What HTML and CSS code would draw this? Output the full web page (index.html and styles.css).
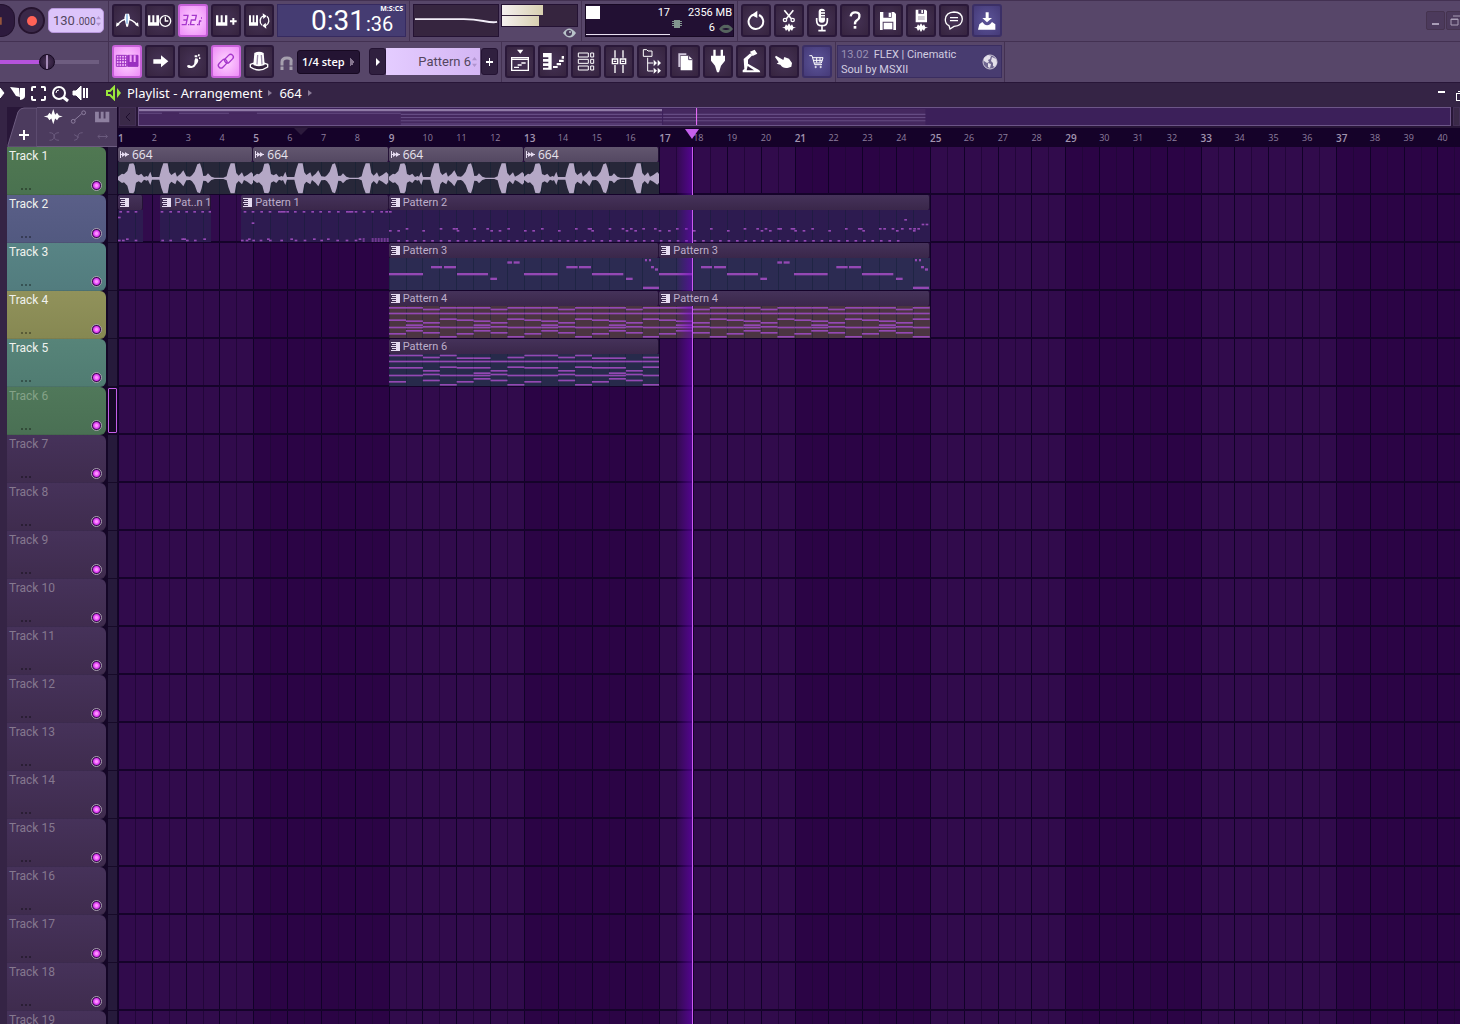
FILE: index.html
```html
<!DOCTYPE html>
<html lang="en">
<head>
<meta charset="utf-8">
<title>Playlist - Arrangement</title>
<link rel="stylesheet" href="styles.css">
</head>
<body>
<header class="toolbar">
  <div class="bar">
    <section class="group transport">
      <button class="play" aria-label="Pause"><svg viewBox="0 0 15 33"><path d="M0 13h1v8H0z" fill="#f0883c"/></svg></button>
      <button class="record" aria-label="Record"><span class="record-dot"></span></button>
      <label class="tempo"><input class="tempo-main" aria-label="Tempo" value="130"><span class="tempo-fine">.000</span><svg class="spin" viewBox="0 0 6 12"><path d="M0 4l3-4 3 4zM0 8l3 4 3-4z"/></svg></label>
    </section>
    <section class="group">
      <button class="tool" aria-label="Metronome"><svg viewBox="0 0 90 99"><path d="M15 64Q30 45 45 45T77 64" fill="none" stroke="#fff" stroke-width="4"/><path d="M12 68l2-13 9 7zM80 68l-2-13-9 7zM40 29h11l3 12-6 27h-5l-6-27z" fill="#fff"/><path d="M45 31v28" stroke="#6fa6dc" stroke-width="4"/></svg></button>
      <button class="tool" aria-label="Wait for input"><svg viewBox="0 0 90 99"><path d="M9 34h7v21h6V34h6v21h6V34h8v31H9z" fill="#fff"/><circle cx="61" cy="51" r="16" fill="#34233f" stroke="#fff" stroke-width="4"/><path d="M61 38v13h9" fill="none" stroke="#fff" stroke-width="4"/></svg></button>
      <button class="tool lit" aria-label="Countdown"><svg viewBox="0 0 90 99" fill="none" stroke="#a636cc" stroke-width="4"><path d="M16 34h14l-3 14H16h11l-3 14H11M41 34h14l-3 14H40l-3 14h13M30 62h3M57 62h3M72 42h-3M70 51h-5l-2 11h3"/></svg></button>
      <button class="tool" aria-label="Overdub"><svg viewBox="0 0 90 99" fill="#fff"><path d="M15 34h7v21h7V34h6v21h7V34h7v31H15z"/><path d="M64 42h6v7h7v6h-7v7h-6v-7h-7v-6h7z"/></svg></button>
      <button class="tool" aria-label="Loop record"><svg viewBox="0 0 90 99"><path d="M15 34h6v21h5V34h5v21h5V34h6v31H15z" fill="#fff"/><path d="M54 64a14 16 0 0 1 4-28M69 37a14 16 0 0 1-4 28" fill="none" stroke="#fff" stroke-width="4"/><path d="M56 28l12 8-10 9zM67 74l-12-9 10-9z" fill="#fff"/></svg></button>
      <output class="clock"><span class="clock-main">0:31</span><span class="clock-side"><small>M:S:CS</small><span>:36</span></span></output>
    </section>
    <section class="group meters">
      <svg class="scope" viewBox="0 0 86 33" preserveAspectRatio="none"><path d="M1 15h50q10 0 20 2t14 1" fill="none" stroke="#f2edf8" stroke-width="2"/></svg>
      <div class="levels"><div class="level-box"><i class="level"></i><i class="level low"></i></div>
      <svg class="eye" viewBox="0 0 13 10"><path d="M0 5q6-9 13 0q-6 9-13 0" fill="#b9c4ca"/><circle cx="6" cy="5" r="3" fill="#4a3b5c"/><circle cx="7" cy="4" r="1" fill="#b9c4ca"/></svg></div>
    </section>
    <section class="group">
      <div class="system">
        <div class="cpu"><i class="cpu-box"></i><span>17</span></div>
        <div class="mem"><span>2356 MB</span></div>
        <svg class="cpu-line" viewBox="0 0 84 16" preserveAspectRatio="none"><path d="M0 14.500h84" fill="none" stroke="#e8e0f0"/></svg>
        <div class="poly"><svg class="chip" viewBox="0 0 10 8"><path d="M2 0h6v8H2zM0 1h10v1H0zM0 3h10v1H0zM0 5h10v1H0z" fill="#82968f"/></svg><span>6</span><svg class="lips" viewBox="0 0 14 9"><path d="M0 5Q4 0 7 1q3-1 7 4-3 4-7 4T0 5z" fill="#56645f"/><path d="M3 5q4-2 8 0-4 2-8 0" fill="#221033"/></svg></div>
      </div>
    </section>
    <section class="group last">
      <button class="tool" aria-label="Undo"><svg viewBox="0 0 90 99"><path d="M38 32a22 22 0 1 0 16 1" fill="none" stroke="#fff" stroke-width="6"/><path d="M31 33l18-13v22z" fill="#fff"/></svg></button>
      <button class="tool" aria-label="Cut"><svg viewBox="0 0 90 99"><path d="M31 19l21 25M58 19L37 44" stroke="#fff" stroke-width="5"/><circle cx="33" cy="48" r="5" fill="none" stroke="#fff" stroke-width="4"/><circle cx="56" cy="48" r="5" fill="none" stroke="#fff" stroke-width="4"/><path d="M24 71l8-2 4-8 4 5 5-8 5 8 4-5 4 8 8 2-8 2-4 8-4-5-5 8-5-8-4 5-4-8z" fill="#fff"/></svg></button>
      <button class="tool" aria-label="Microphone"><svg viewBox="0 0 90 99"><rect x="35" y="14" width="19" height="42" rx="9" fill="#fff"/><path d="M42 23h12M42 31h12M42 39h12" stroke="#34233f" stroke-width="3"/><path d="M29 42v8q0 15 16 15t16-15v-8M45 65v14M34 80h22" fill="none" stroke="#fff" stroke-width="5"/></svg></button>
      <button class="tool" aria-label="Help"><svg viewBox="0 0 90 99"><path d="M32 37q2-13 15-12t11 13q0 7-7 11t-6 12" fill="none" stroke="#fff" stroke-width="7"/><path d="M41 66h8v8h-8z" fill="#fff"/></svg></button>
      <button class="tool" aria-label="Save"><svg viewBox="0 0 90 99"><path d="M21 24h42l6 6v48H21z" fill="#fff"/><path d="M31 24h25v17H31zM29 53h32v25H29z" fill="#4c3a5e"/><path d="M47 26h7v13h-7zM32 56h26v20H32z" fill="#fff"/></svg></button>
      <button class="tool" aria-label="Save new version"><svg viewBox="0 0 90 99"><path d="M29 17h30l4 4v34H29z" fill="#fff"/><path d="M37 17h17v12H37zM36 38h20v2H36zM36 44h20v2H36z" fill="#4c3a5e"/><path d="M46 18h5v9h-5zM24 71l8-2 4-8 4 5 5-8 5 8 4-5 4 8 8 2-8 2-4 8-4-5-5 8-5-8-4 5-4-8z" fill="#fff"/></svg></button>
      <button class="tool" aria-label="Comments"><svg viewBox="0 0 90 99" fill="none" stroke="#fff" stroke-width="4"><path d="M30 65q-12-6-11-19 2-21 26-22 24 1 25 21-1 21-25 22l-12 8z"/><path d="M33 41h24M33 50h24"/></svg></button>
      <button class="tool blue" aria-label="Download"><svg viewBox="0 0 90 99" fill="#fff"><path d="M41 25h9v17h10L45 55 31 42h10zM22 61l9-7 6 7q8 6 17 0l6-7 10 7v16H18z"/></svg></button>
    </section>
    <div class="window-keys">
      <button class="window-key" aria-label="Minimize"><svg viewBox="0 0 19 19"><path d="M6 12h7v2H6z" fill="#a99db6"/></svg></button>
      <button class="window-key" aria-label="Restore"><svg viewBox="0 0 19 19" fill="none" stroke="#a99db6"><path d="M5 8h7v6H5zM5 8.500h7M7 5h8v7"/></svg></button>
    </div>
  </div>
  <div class="bar">
    <section class="group transport"><input class="pitch" type="range" min="0" max="100" value="47" aria-label="Main volume"></section>
    <section class="group">
      <button class="tool lit" aria-label="Typing keyboard"><svg viewBox="0 0 90 99" fill="none" stroke="#9a2fc0" stroke-width="3"><path d="M13 31h31v33H13zM13 39h31M13 47h31M13 56h31M21 31v33M29 31v33M37 31v33"/><path d="M47 31h31v33H47z" fill="#9a2fc0"/><path d="M56 31v20M68 31v20" stroke="#f4a4fa" stroke-width="6"/></svg></button>
      <button class="tool" aria-label="Step"><svg viewBox="0 0 90 99"><path d="M25 43h23V31l22 18-22 18V56H25z" fill="#fff"/></svg></button>
      <button class="tool" aria-label="Slide"><svg viewBox="0 0 90 99" fill="#fff"><path d="M27 62q6-4 12 1 9-1 10-9 0-10 3-14 9-1 9 7-2 8-7 12-4 9-13 10-13 2-14-7z"/><path d="M50 31h8v6h-8zM60 28h5v6h-5zM63 37h4v5h-4z"/></svg></button>
      <button class="tool lit" aria-label="Link"><svg viewBox="0 0 90 99" fill="none" stroke="#a636cc" stroke-width="4"><rect x="20" y="48" width="30" height="16" rx="8" transform="rotate(-45 35 56)"/><rect x="39" y="33" width="30" height="16" rx="8" transform="rotate(-45 54 41)"/></svg></button>
      <button class="tool" aria-label="Stamp"><svg viewBox="0 0 90 99"><path d="M19 58q26-12 52 0v8q-26 18-52 0z" fill="#34233f" stroke="#fff" stroke-width="4"/><path d="M31 24q14-8 28 0l3 36q-17 7-34 0z" fill="#fff"/><path d="M41 30l-2 28M52 30l2 28" stroke="#9c8cab" stroke-width="4"/></svg></button>
      <svg class="magnet" viewBox="0 0 13 14"><path d="M2 14V6q0-4 5-4t4 4v8" fill="none" stroke="#a6a0ae" stroke-width="3"/><path d="M0 10h4M9 10h4" stroke="#574669"/></svg>
      <select class="snap" aria-label="Snap"><option>1/4 step</option></select>
      <button class="mini-key" aria-label="Pattern menu"><svg viewBox="0 0 17 27"><path d="M7 10l4 4-4 4z" fill="#fff"/></svg></button><span class="pattern-box"><select class="pattern" aria-label="Pattern"><option>Pattern 6</option></select><svg class="spin" viewBox="0 0 6 12"><path d="M0 4l3-4 3 4zM0 8l3 4 3-4z"/></svg></span><button class="mini-key add" aria-label="Add pattern"><svg viewBox="0 0 17 27"><path d="M8 10h1v3h3v2H9v3H8v-3H5v-2h3z" fill="#fff"/></svg></button>
    </section>
    <section class="group">
      <button class="tool" aria-label="Playlist"><svg viewBox="0 0 90 99"><path d="M36 14h19l-9 12z" fill="#fff"/><path d="M20 38h50v38H20zM20 43h50" fill="none" stroke="#fff" stroke-width="4"/><path d="M27 67h15M38 60h12M49 54h13" stroke="#fff" stroke-width="4"/></svg></button>
      <button class="tool" aria-label="Piano roll"><svg viewBox="0 0 90 99" fill="#fff"><path d="M15 24h26v50H15v-6h16v-5H15v-8h16v-5H15v-8h16v-5H15z"/><path d="M45 63h14v6H45zM56 54h13v7H56zM63 44h14v7H63zM71 33h7v8h-7z"/></svg></button>
      <button class="tool" aria-label="Channel rack"><svg viewBox="0 0 90 99" fill="none" stroke="#fff" stroke-width="3"><path d="M22 24h30v12H22zM59 24h9v12h-9zM22 43h30v12H22zM59 43h9v12h-9zM22 63h30v12H22zM59 63h9v12h-9z"/></svg></button>
      <button class="tool" aria-label="Mixer"><svg viewBox="0 0 90 99" fill="none" stroke="#fff" stroke-width="4"><path d="M25 42h16v14H25zM49 42h16v14H49zM33 16v22M57 16v22M33 60v24M57 60v24M29 49h8M53 49h8"/></svg></button>
      <button class="tool" aria-label="Browser"><svg viewBox="0 0 90 99"><path d="M19 14h10l4 4h12v16H19zM32 38v40h16M32 54h16" fill="none" stroke="#fff" stroke-width="3"/><path d="M50 44l10 10-10 10zM62 44l10 10-10 10zM50 68l10 9-10 9zM62 68l10 9-10 9z" fill="#fff"/></svg></button>
      <button class="tool" aria-label="Project"><svg viewBox="0 0 90 99"><path d="M25 25h24v5H31v36h-6z" fill="#cfc5da"/><path d="M32 32h24l11 11v33H32z" fill="#fff"/><path d="M56 32v12h11" fill="none" stroke="#4c3a5e" stroke-width="3"/></svg></button>
      <button class="tool" aria-label="Plugins"><svg viewBox="0 0 90 99" fill="#fff"><path d="M31 14h7v18h15V14h7v18h6v15L54 62l-6 20h-6l-6-20-12-15V32h7z"/></svg></button>
      <button class="tool" aria-label="Tempo tapper"><svg viewBox="0 0 90 99"><path d="M42 20l14-6 8 12-14 7zM23 42l20-17 6 6-13 13v12l34 20 3 6H20v-6l5-4z" fill="#fff"/><path d="M35 63l-3 13h22z" fill="#34233f"/></svg></button>
      <button class="tool" aria-label="Touch"><svg viewBox="0 0 90 99"><path d="M21 32l22 13 3-9 14 5 9 13-2 11-9 3q-15 4-24-9l-11-3 6-4-11-16z" fill="#fff"/></svg></button>
      <button class="tool blue" aria-label="Shop"><svg viewBox="0 0 90 99" fill="none" stroke="#fff" stroke-width="3"><path d="M22 32h8l8 27h22M32 38h31l-5 16H37M33 46h28M44 38v15M54 38v15"/><circle cx="41" cy="66" r="2"/><circle cx="56" cy="66" r="2"/></svg></button>
    </section>
    <section class="group news-group">
      <a class="news" href="#news"><span><time>13.02</time>FLEX | Cinematic<br>Soul by MSXII</span><svg class="globe" viewBox="0 0 16 16"><circle cx="8" cy="8" r="7" fill="#6f6690" stroke="#c9c4d4"/><path d="M2 4l4-3 3 1-1 3-2 1 1 2-2 1-3-2zM6 9l3 1-1 4-2-1zM10 3l4 2 1 4-2 4-2-1v-3l-2-2z" fill="#e4e0ea"/></svg></a>
    </section>
  </div>
</header>

<main class="playlist">
  <div class="titlebar">
    <svg class="title-icons" viewBox="0 0 90 20" fill="none" stroke="#fff"><path d="M0 5l4 5-4 5z" fill="#fff"/><path d="M10 4l9 1 1 9-4-1z" fill="#fff" stroke="none"/><path d="M20 5h5v8q0 3-5 4z" fill="#fff" stroke="none"/><path d="M32 8V5q0-1 1-1h3M41 4h3q1 0 1 1v3M45 13v3q0 1-1 1h-3M36 17h-3q-1 0-1-1v-3" stroke-width="2"/><circle cx="59" cy="10" r="6" stroke-width="2"/><path d="M63 14l5 4" stroke-width="3"/><path d="M56 10q0-3 3-3"/><path d="M73 8h3l5-5v14l-5-5h-3z" fill="#fff"/><path d="M84 5v10M87 5v10" stroke-width="2"/></svg>
    <svg class="speaker" viewBox="0 0 15 16"><path d="M1 6h3l4-4v12l-4-4H1z" fill="none" stroke="#9ae63c" stroke-width="2"/><path d="M11 3l4 5-4 5z" fill="#9ae63c"/></svg>
    <h1 class="title">Playlist - Arrangement<i class="caret"></i>664<i class="caret"></i></h1>
    <svg class="title-keys" viewBox="0 0 24 20" fill="#fff"><path d="M2 8h7v2H2z"/><path d="M20 10h4v1h-3v6h3v1h-4zM22 8h2v1h-2z"/></svg>
  </div>
  <div class="arrangement">
    <div class="corner">
      <button class="tab" aria-label="Add track"><svg viewBox="0 0 30 40"><path d="M1 40V38L11 5Q13 1 17 1H30V40z" fill="#4c3b5e" stroke="#6d5c80"/><path d="M12 27h4v-4h2v4h4v2h-4v4h-2v-4h-4z" fill="#fff"/></svg></button>
      <svg class="modes" viewBox="0 0 80 40"><path d="M5 9l4-1 2-3 2 2 2-6 2 6 2-2 2 3 4 1-4 1-2 3-2-2-2 6-2-6-2 2-2-3z" fill="#fff"/><path d="M37 13l8-7" stroke="#8e80a0"/><circle cx="36" cy="14" r="2" fill="none" stroke="#8e80a0"/><circle cx="47" cy="5" r="2" fill="none" stroke="#8e80a0"/><path d="M59 4h4v7h2V4h3v7h2V4h4v11H59z" fill="#8e80a0"/><g fill="none" stroke="#6c5c7e"><path d="M11 26q5 0 5 4t5 4M11 34q5 0 5-4t5-4M37 34q4 0 4-4t5-4M37 28l5 3M62 30h10M64 28l-2 2 2 2M70 28l2 2-2 2"/></g></svg>
    </div>
    <div class="topline">
      <div class="overview-row">
        <button class="scroll" aria-label="Scroll left"><svg viewBox="0 0 17 18"><path d="M11 5L7 9l4 4" fill="none" stroke="#1d0d2c"/></svg></button>
        <svg class="overview" viewBox="0 0 1312 16" preserveAspectRatio="none"><path d="M0 1h787v15H0z" fill="#45285f"/><path d="M0 2h524" stroke="#8f7aa6" stroke-width="2"/><path d="M0 5h23M40 5h50M118 5h144M262 6h525M262 9h525M262 12h525M262 15h262" stroke="#654b83" /><path d="M524 0v16" stroke="#3c205a"/><path d="M558 0v16" stroke="#f070ff"/></svg>
        <button class="scroll end" aria-label="Scroll right"></button>
      </div>
      <div class="ruler" id="ruler"></div>
    </div>
    <div class="heads" id="heads"></div>
    <div class="lanes" id="lanes">
      <div class="grid" id="grid"></div>
    </div>
  </div>
</main>
<script src="playlist.js"></script>
</body>
</html>
```
FILE: playlist.js
```js
const VISIBLE_BARS = 119 / 3;
const pct = bars => (bars / VISIBLE_BARS * 100) + '%';
const el = (tag, cls, html) => {
  const node = document.createElement(tag);
  if (cls) node.className = cls;
  if (html) node.innerHTML = html;
  return node;
};

// Ruler and grid
const ruler = document.getElementById('ruler');
for (let b = 1; b <= 40; b++) ruler.append(el('span', b % 4 === 1 ? 'bar-no major' : 'bar-no', String(b)));
const grid = document.getElementById('grid');
for (let h = 0; h < 80; h++) grid.append(el('i', (h % 2 ? 'half' : 'whole') + (Math.floor(h / 8) % 2 ? ' dark' : '')));

// Track heads and lanes
const tones = ['green', 'blue', 'teal', 'olive', 'sea', 'moss'];
const heads = document.getElementById('heads');
const lanes = document.getElementById('lanes');
const rows = [];
for (let t = 1; t <= 19; t++) {
  const head = el('div', 'head ' + (tones[t - 1] || 'empty'));
  head.innerHTML = `<label class="name" for="mute${t}">Track ${t}</label><span class="dots"><i></i><i></i><i></i></span><input class="led" type="checkbox" id="mute${t}" checked>`;
  const wrap = el('div', 'head-row');
  wrap.append(head, el('i', t === 6 ? 'focus on' : 'focus'));
  heads.append(wrap);
  const lane = el('div', 'lane');
  lanes.append(lane);
  rows.push(lane);
}

// Note pictures: three units to a pixel, one bar is 101.5 units
const note = (x, y, w, h) => `<rect x="${x}" y="${y}" width="${w}" height="${h}"/>`;
const picture = (bars, body) => `<svg class="notes" viewBox="0 0 ${bars * 101.5} 96" preserveAspectRatio="none">${body}</svg>`;
const dots = list => list.map(([x, y]) => note(x - 4, y - 3, 8, 5)).join('');

// Waveform outline as pairs: position, half height
const outline = [0,5, 12,14, 18,12, 28,22, 34,44, 46,45, 50,38, 54,13, 62,9, 70,14, 78,4, 86,7, 90,5, 97,20, 102,4, 124,4, 130,28, 136,45, 149,45, 154,18, 160,10, 172,18, 177,5, 188,14, 196,24, 205,6, 216,5, 222,9, 230,20, 238,42, 246,45, 251,30, 256,7, 264,8, 270,15, 280,5, 290,2, 316,2, 326,6, 331,26, 338,45, 350,45, 355,16, 362,8, 372,18, 378,5, 388,10, 400,19, 406,12];
let up = '', down = '';
for (let i = 0; i < outline.length; i += 2) {
  up += `${outline[i]},${49 - outline[i + 1]} `;
  down = `${outline[i]},${49 + outline[i + 1]} ` + down;
}
const wave = () => picture(4, `<polygon class="wave" points="${up}${down}"/>`);

const row = (xs, y) => xs.map(x => [x, y]);
const p1short = dots([...row([8, 30, 54], 6), [4, 23], ...row([4, 16, 54], 92), [28, 88]]);
const p1mid = dots([...row([6, 32, 56, 80, 104, 128, 150], 6), ...row([8, 32, 82, 106], 92), ...row([68, 74, 134], 88)]);
const p1long = dots([...row([12, 36, 62, 87, 115, 122, 130, 140, 163, 189, 215, 239, 265, 292, 319, 326, 333, 345, 369, 395, 422, 437], 6),
  [36, 40], ...row([4, 18, 38, 60, 88, 122, 165, 192, 242, 290, 318, 345], 92), ...row([25, 82, 152, 220, 262, 357], 88)])
  + [368, 395, 404, 413, 422, 431, 440].map(x => note(x - 3, 85, 6, 4) + note(x - 3, 91, 6, 4)).join('');
const low = [];
for (let x = 29; x < 1540; x += 25.4) low.push([x, 93]);
const upper = [54, 156, 195, 203, 257, 296, 359, 460, 562, 600, 605, 663, 702, 727, 764, 799, 865, 892, 967, 1068, 1106, 1131, 1169, 1175, 1209, 1215, 1271, 1372, 1411, 1417, 1474, 1487, 1512, 1540, 1564, 1577, 1589];
const under = [4, 29, 104, 207, 308, 333, 409, 434, 511, 611, 714, 740, 813, 841, 916, 1018, 1119, 1144, 1220, 1245, 1322, 1424, 1525, 1576];
const p2 = dots([[4, 6], ...row(upper, 57), ...row(under, 63), ...low, [1550, 30], [1602, 44], [1614, 44]]);
const p3 = [[0,49,102],[126,28,33],[165,28,36],[204,49,93],[304,63,20],[355,14,14],[374,14,18],[405,49,101],[532,28,34],[570,28,36],[609,49,94],[711,63,20],[768,7,6],[780,7,6],[786,28,9],[798,35,9],[762,90,48]]
  .map(([x, y, w]) => note(x, y - 4, w, 7)).join('');
const chords = cols => cols.map((ys, i) => ys.map(y => note(i * 50.75, y - 3, 51, 5)).join('')).join('');
const four = [[6,23,43,65,84],[6,23,46,58,65,75],[11,23,51,63,81],[6,23,40,65,93]];
const p4 = chords(Array.from({length: 16}, (_, i) => four[i % 4]));
const eight = [[5,23,42,65,84],[5,23,42,65],[11,23,51,62,80],[5,23,40,65,93],[13,23,42,65,84],[13,23,42,58,65,75],[23,51,62,80],[11,23,40,65,93]];
const p6 = chords(Array.from({length: 16}, (_, i) => eight[i % 8]));

const clips = [
  [0, 0, 4, '664', 'audio', wave()], [0, 4, 4, '664', 'audio', wave()], [0, 8, 4, '664', 'audio', wave()], [0, 12, 4, '664', 'audio', wave()],
  [1, 0, 0.75, '', 'violet', picture(0.75, p1short)],
  [1, 1.25, 1.5, 'Pat..n 1', 'violet', picture(1.5, p1mid)],
  [1, 3.64, 4.36, 'Pattern 1', 'violet', picture(4.36, p1long)],
  [1, 8, 16, 'Pattern 2', 'violet', picture(16, p2)],
  [2, 8, 8, 'Pattern 3', 'navy', picture(8, p3)], [2, 16, 8, 'Pattern 3', 'navy', picture(8, p3)],
  [3, 8, 8, 'Pattern 4', 'brown', picture(8, p4)], [3, 16, 8, 'Pattern 4', 'brown', picture(8, p4)],
  [4, 8, 8, 'Pattern 6', 'slate', picture(8, p6)],
];
const patternIcon = '<svg class="clip-icon" viewBox="0 0 9 9"><path d="M0 0h9v9H0V8h5V7H1V6h4V5H0V4h5V3H1V2h4V1H0z"/></svg>';
const audioIcon = '<svg class="clip-icon" viewBox="0 0 9 9"><path d="M0 1h1v7H0zM1 4h1V2l3 2V2l3 2h1v1H8L5 7V5L2 7V5H1z"/></svg>';
for (const [track, start, length, name, kind, body] of clips) {
  const clip = el('div', 'clip ' + kind);
  clip.style.left = pct(start);
  clip.style.width = pct(length);
  const icon = kind === 'audio' ? audioIcon : patternIcon;
  let lines = '';
  const first = Math.ceil(start * 2) / 2;
  for (let b = first; b < start + length; b += 0.5) lines += `<i class="tick" style="left:${(b - start) / length * 100}%"></i>`;
  clip.innerHTML = `<div class="clip-head">${icon}<span>${name}</span></div><div class="clip-body">${lines}${body}</div>`;
  rows[track].append(clip);
}

// Play position
const playhead = el('div', 'playhead');
playhead.style.left = pct(16.97);
lanes.append(playhead);
for (const [cls, at] of [['marker ghost', 5.4], ['marker', 16.97]]) {
  const marker = el('i', cls);
  marker.style.left = pct(at);
  ruler.append(marker);
}
```
FILE: styles.css
```css
* { box-sizing: border-box; }
body {
  margin: 0;
  height: 100vh;
  overflow: hidden;
  display: flex;
  flex-direction: column;
  background: #160527;
  color: #fff;
  font-family: "Open Sans", "Noto Sans", sans-serif;
  font-size: 11px;
}
button, input, select { font: inherit; color: inherit; margin: 0; padding: 0; border: 0; }
svg { display: block; }

/* Toolbar */
.toolbar { background: #574669; border-bottom: 1px solid #281638; flex: none; }
.bar { display: flex; height: 41px; border-top: 1px solid #433152; overflow: hidden; }
.group { display: flex; align-items: center; gap: 3px; padding: 0 3px 1px; border-right: 1px solid #433152; flex: none; }
.transport { width: 109px; padding: 0 4px 1px 0; }
.play { width: 15px; height: 33px; border-radius: 0 14px 14px 0; background: #2d1a3d; border: 1px solid #23122f; border-left: 0; }
.play svg { width: 15px; height: 31px; }
.record { width: 27px; height: 27px; border-radius: 50%; background: #3a2848; border: 2px solid #26142f; display: grid; place-items: center; }
.record-dot { width: 10px; height: 10px; border-radius: 50%; background: #ff6257; }
.tempo { display: flex; align-items: baseline; width: 56px; height: 25px; padding: 0 2px 0 4px; border-radius: 5px; background: #dcc4fa; border: 1px solid #b796dc; color: #54465f; font-family: Roboto, sans-serif; }
.tempo-main { width: 23px; height: 23px; background: none; font-size: 13px; }
.tempo-fine { font-size: 10px; flex: 1; }
.spin { width: 5px; height: 12px; align-self: center; fill: #b094cf; }
.tool { width: 30px; height: 33px; border-radius: 3px; background: radial-gradient(#463356, #36243f); border: 2px solid #2a1839; }
.tool svg { width: 30px; height: 33px; margin: -2px; }
.lit { background: radial-gradient(#ffd6ff, #ee8cf8); border-color: #c660d8; }
.blue { background: radial-gradient(#5d5599, #453a78); border-color: #3b2f66; }
.clock { display: flex; justify-content: flex-end; width: 129px; height: 33px; padding: 0 2px 0 0; background: #453c72; border: 1px solid #362a60; font-family: Roboto, sans-serif; }
.clock-main { font-size: 28px; line-height: 32px; }
.clock-side { display: flex; flex-direction: column; width: 38px; padding-left: 1px; font-size: 20px; line-height: 22px; }
.clock-side small { font: bold 7px/8px "Open Sans", sans-serif; text-align: right; }
.meters { gap: 2px; align-items: flex-start; padding: 3px 3px 0; }
.scope { width: 86px; height: 33px; background: #36253f; border: 1px solid #241233; }
.levels { width: 77px; display: flex; flex-direction: column; align-items: flex-end; gap: 1px; }
.level-box { width: 77px; height: 23px; background: #36253f; border: 1px solid #241233; display: flex; flex-direction: column; gap: 1px; }
.level { width: 41px; height: 10px; background: linear-gradient(90deg, #f5f0f0, #d8d0b0); }
.low { width: 37px; }
.eye { width: 13px; height: 10px; margin-right: 2px; }
.system { display: grid; grid-template-columns: 84px 63px; grid-template-rows: 15px 16px; width: 149px; height: 33px; background: #221033; border: 1px solid #170824; font: 11px/16px Roboto, sans-serif; }
.cpu, .mem, .poly { display: flex; align-items: center; justify-content: space-between; }
.mem { justify-content: flex-end; padding-right: 1px; }
.cpu-box { width: 14px; height: 13px; background: #fff; }
.cpu-line { width: 84px; height: 16px; }
.poly { gap: 4px; padding-left: 2px; }
.poly span { margin-left: auto; }
.chip { width: 10px; height: 8px; align-self: flex-start; }
.lips { width: 14px; height: 9px; }
.last { border-right: 0; }
.news-group { padding: 0 2px 1px 1px; }
.window-keys { display: flex; gap: 1px; margin: 10px -5px 0 auto; }
.window-key { width: 19px; height: 19px; flex: none; background: #4c3a5c; border: 1px solid #45334f; border-radius: 2px; }
.window-key svg { width: 19px; height: 19px; margin: -1px; }
.pitch { appearance: none; width: 99px; height: 20px; background: linear-gradient(90deg, #b553dc 47%, #6e5d80 47%) center / 100% 4px no-repeat; }
.pitch::-webkit-slider-thumb { appearance: none; width: 16px; height: 16px; border-radius: 50%; border: 1px solid #170a22; background: linear-gradient(90deg, transparent 6px, #a68cb8 6px, #a68cb8 8px, transparent 8px), radial-gradient(#4b3658, #241332); }
.magnet { width: 13px; height: 14px; margin: 2px 1px 0 3px; }
.snap { appearance: none; width: 63px; height: 24px; padding: 0 4px; border-radius: 3px; border: 1px solid #170922; background: #241433 conic-gradient(from 225deg at 5px 4px, #85758f 90deg, transparent 0) 52px 50% / 5px 8px no-repeat; font-weight: 600; }
.mini-key { width: 17px; height: 27px; background: #30203f; border: 1px solid #241333; border-radius: 3px; margin: 0 -3px 0 6px; }
.mini-key svg { width: 17px; height: 27px; margin: -1px; }
.add { margin: 0 0 0 -2px; }
.pattern-box { display: flex; align-items: center; width: 94px; height: 27px; padding-right: 3px; background: linear-gradient(90deg, #e4ccff, #d4b6f4); }
.pattern { appearance: none; flex: 1; height: 27px; padding-right: 1px; text-align-last: right; background: none; color: #54465f; font: 13px Roboto, sans-serif; }
.news { display: flex; align-items: center; justify-content: space-between; width: 165px; height: 33px; padding: 0 3px; background: #483c70; border: 1px solid #3a2d60; color: #d2cde0; text-decoration: none; font: 11px/15px Roboto, sans-serif; }
.news time { color: #9a92b4; margin-right: 5px; }
.globe { width: 16px; height: 16px; }

/* Playlist window */
.playlist { flex: 1; min-height: 0; display: flex; flex-direction: column; }
.titlebar { display: flex; align-items: center; height: 24px; padding-bottom: 4px; background: #352445; flex: none; }
.title-icons { width: 90px; height: 20px; }
.speaker { width: 15px; height: 16px; margin: 0 6px 0 16px; }
.title { margin: 0; font: 400 13px/20px "Noto Sans", sans-serif; display: flex; align-items: center; }
.caret { border: 3px solid transparent; border-left: 4px solid #8a7c98; border-right: 0; margin: 0 7px 0 6px; }
.title-keys { width: 24px; height: 20px; margin-left: auto; }
.arrangement { display: grid; grid-template-columns: 111px minmax(0, 1fr); grid-template-rows: 40px 1fr; flex: 1; min-height: 0; border-left: 7px solid #352445; overflow: hidden; background: #160527; }
.corner { display: flex; width: 110px; height: 40px; background: #281638; }
.tab { width: 30px; height: 40px; background: none; }
.tab svg { width: 30px; height: 40px; }
.modes { width: 80px; height: 40px; background: #4c3b5e; border: 1px solid #6d5c80; border-width: 1px 0; }
.topline { display: flex; flex-direction: column; min-width: 0; background: #281638; }
.overview-row { display: flex; height: 21px; padding: 0 0 2px 1px; gap: 2px; }
.scroll { width: 17px; height: 19px; background: #3a2948; border: 1px solid #432f55; flex: none; }
.scroll svg { width: 17px; height: 18px; margin: -1px; }
.end { width: 7px; }
.overview { flex: 1; min-width: 0; height: 19px; background: #3c205a; border: 1px solid #6d5588; }
.ruler { position: relative; flex: 1; display: grid; grid-template-columns: repeat(39, minmax(0, 3fr)) minmax(0, 2fr); background: #150229; border-bottom: 1px solid #2b1440; }
.bar-no { font: 9px/20px "Open Sans", sans-serif; color: #8d7f9d; }
.major { font-size: 10px; font-weight: 600; color: #a295b0; }
.marker { position: absolute; top: 1px; margin-left: -7px; border: 7px solid transparent; border-top: 10px solid #c560ec; border-bottom: 0; }
.ghost { top: 0; border-top: 7px solid #2c1a3c; }
.heads { display: flex; flex-direction: column; }
.head-row { display: flex; gap: 2px; height: 48px; flex: none; background: #140626; }
.head { position: relative; width: 99px; height: 48px; border-radius: 0 6px 6px 0; border-bottom: 1px solid #00000022; }
.name { display: block; padding: 0 2px; font: 12px/18px Roboto, sans-serif; color: #f0f2ee; }
.dots { position: absolute; left: 14px; bottom: 4px; display: flex; gap: 2px; }
.dots i { width: 2px; height: 2px; background: #00000055; }
.led { appearance: none; position: absolute; right: 4px; bottom: 3px; width: 11px; height: 11px; border-radius: 50%; border: 1px solid #a79fae; background: radial-gradient(#ff90ff 1px, #d838f0 3px, #3a0850 4px); }
.green { background: linear-gradient(#507852, #4a7250); }
.blue.head { background: linear-gradient(#5a5f88, #525980); }
.teal { background: linear-gradient(#588485, #527c7e); }
.olive { background: linear-gradient(#91925b, #868852); }
.sea { background: linear-gradient(#578479, #507c72); }
.moss { background: linear-gradient(#50785a, #4a7054); }
.moss .name { color: #85a288; }
.empty { background: linear-gradient(#46325a, #3f2c4e); }
.empty .name { color: #85788f; }
.focus { width: 9px; background: #261a3b; border-bottom: 1px solid #160a28; }
.on { border: 1px solid #c45ee8; margin: 1px 0 2px; border-radius: 1px; background: #170a26; }
.lanes { position: relative; overflow: hidden; background: #310b4c; }
.grid { position: absolute; inset: 0; display: grid; grid-template-columns: repeat(79, minmax(0, 3fr)) minmax(0, 1fr); overflow: hidden; grid-auto-rows: 100%; }
.whole { border-left: 1px solid #110228; }
.half { border-left: 1px solid #22063a; }
.dark { background: #2b0445; }
.lane { position: relative; height: 48px; border-bottom: 2px solid #15032a; }
.clip { position: absolute; top: 0; height: 47px; display: flex; flex-direction: column; overflow: hidden; }
.clip-head { position: relative; z-index: 2; display: flex; align-items: center; gap: 3px; height: 15px; flex: none; padding-left: 2px; border-radius: 2px; background: linear-gradient(#45325a, #3a274a); border-right: 1px solid #241236; color: #bdaecb; font: 11px/14px Roboto, sans-serif; white-space: nowrap; }
.clip-icon { width: 9px; height: 9px; flex: none; fill: #e6dcf0; }
.clip-body { position: relative; height: 32px; }
.tick { position: absolute; top: 0; bottom: 0; width: 1px; background: #0d1d3066; }
.notes { position: absolute; left: 0; top: 0; width: 100%; height: 32px; fill: #9448b4; }
.wave { fill: #b5a8c6; }
.audio .clip-head { background: linear-gradient(#62566f, #544862); color: #e8e4ee; font: 12px/14px "Open Sans", sans-serif; }
.audio .clip-body { background: #272739; }
.violet .clip-body { background: #2d1b50; }
.navy .clip-body { background: #2c2b52; }
.brown .clip-body { background: #4b3541; }
.slate .clip-body { background: #272a4b; }
.playhead { position: absolute; z-index: 1; top: 0; bottom: 0; width: 17px; margin-left: -16px; background: linear-gradient(90deg, #7000c000, #7000c888); border-right: 1px solid #c95cf0; }
```
